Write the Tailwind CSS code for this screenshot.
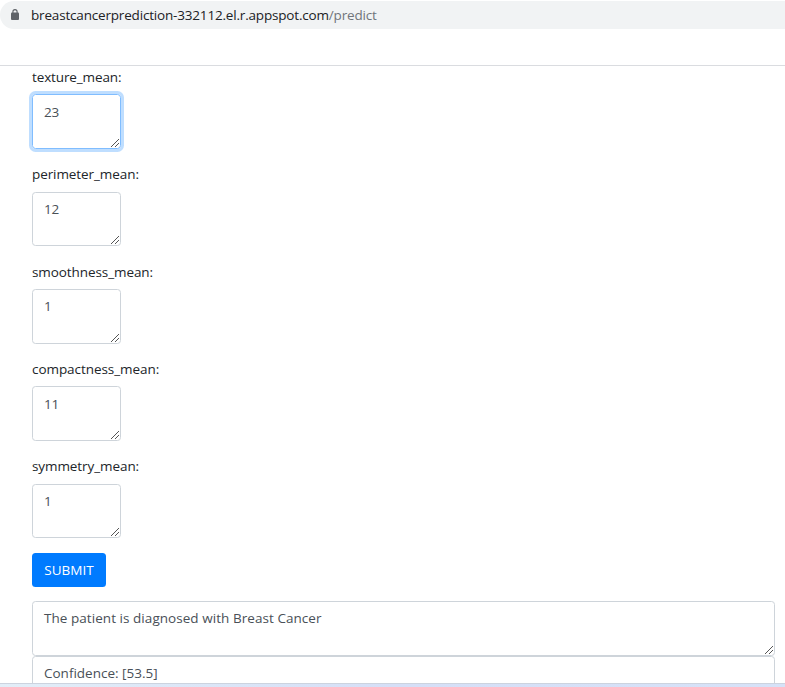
<!DOCTYPE html>
<html lang="en">
<head>
<meta charset="utf-8">
<title>Prediction</title>
<script src="https://cdn.jsdelivr.net/npm/@tailwindcss/browser@4"></script>
</head>
<body class="bg-white">
<svg class="hidden"><symbol id="grip" viewBox="0 0 8 8"><path d="M0 8 8 0M4 8l4-4" fill="none" stroke="#555" stroke-width="1"/></symbol></svg>
<div class="flex h-[687px] w-[785px] flex-col overflow-hidden bg-white font-['Open_Sans','Noto_Sans',sans-serif] text-[13.5px] text-[#212529]">
  <header class="h-[66px] shrink-0 border-b border-[#dadce0] pt-px">
    <div class="flex h-7 items-center rounded-l-full bg-[#f1f3f4] pl-[11px]">
      <svg class="mb-px h-[11px] w-[8px] shrink-0" viewBox="0 0 8 11"><rect y="3.5" width="8" height="7.5" rx="1" fill="#5f6368"/><path d="M1.9 4.2V2.7a2.1 2.1 0 0 1 4.2 0v1.5" fill="none" stroke="#5f6368" stroke-width="1.1"/></svg>
      <span class="ml-3 whitespace-nowrap text-[13.5px] tracking-[-0.18px] text-[#202124]">breastcancerprediction-332112.el.r.appspot.com<span class="text-[#70757a]">/predict</span></span>
    </div>
  </header>
  <main class="flex min-h-0 flex-1 flex-col overflow-hidden pr-[10px] pl-8">
    <div class="flex flex-col">
      <label class="block h-[83px]"><span class="block h-7 pt-px leading-5 tracking-[-0.12px]">texture_mean:</span>
        <span class="relative block h-[55px] w-[89px] rounded-[3.5px] border border-[#80bdff] px-[11px] pt-[7px] leading-5 tracking-[-0.2px] text-[#495057] shadow-[0_0_0_3px_#bfdeff]">23<svg class="absolute right-px bottom-px size-2"><use href="#grip"/></svg></span></label>
      <label class="mt-3.5 block h-[83px]"><span class="block h-[29px] pt-px leading-5 tracking-[-0.08px]">perimeter_mean:</span>
        <span class="relative block h-[54px] w-[89px] rounded-[3.5px] border border-[#ced4da] px-[11px] pt-[6px] leading-5 tracking-[-0.2px] text-[#495057]">12<svg class="absolute right-px bottom-px size-2"><use href="#grip"/></svg></span></label>
      <label class="mt-[15px] block h-[83px]"><span class="block h-7 pt-px leading-5 tracking-[-0.08px]">smoothness_mean:</span>
        <span class="relative block h-[55px] w-[89px] rounded-[3.5px] border border-[#ced4da] px-[11px] pt-[6px] leading-5 text-[#495057]">1<svg class="absolute right-px bottom-px size-2"><use href="#grip"/></svg></span></label>
      <label class="mt-3.5 block h-[83px]"><span class="block h-7 pt-px leading-5 tracking-[-0.06px]">compactness_mean:</span>
        <span class="relative block h-[55px] w-[89px] rounded-[3.5px] border border-[#ced4da] px-[11px] pt-[7px] leading-5 tracking-[-0.2px] text-[#495057]">11<svg class="absolute right-px bottom-px size-2"><use href="#grip"/></svg></span></label>
      <label class="mt-3.5 block h-[83px]"><span class="block h-[29px] pt-px leading-5 tracking-[-0.08px]">symmetry_mean:</span>
        <span class="relative block h-[54px] w-[89px] rounded-[3.5px] border border-[#ced4da] px-[11px] pt-[6px] leading-5 text-[#495057]">1<svg class="absolute right-px bottom-px size-2"><use href="#grip"/></svg></span></label>
    </div>
    <button class="mt-[15px] h-[34px] w-[74px] shrink-0 rounded-[3.5px] bg-[#007bff] text-white">SUBMIT</button>
    <div class="relative mt-[14px] h-[55px] shrink-0 rounded-[3.5px] border border-[#ced4da] px-[11px] pt-[6px] leading-5 tracking-[0.05px] text-[#495057]">The patient is diagnosed with Breast Cancer<svg class="absolute right-px bottom-px size-2"><use href="#grip"/></svg></div>
    <div class="h-[55px] shrink-0 rounded-[3.5px] border border-[#ced4da] px-[11px] pt-[6px] leading-5 text-[#495057]">Confidence: [53.5]</div>
  </main>
  <footer class="h-1 shrink-0 border-t border-[#ccd3df] bg-linear-to-r from-[#e2eef8] via-[#d5dff7] to-[#d6e2f8]"></footer>
</div>
</body>
</html>
